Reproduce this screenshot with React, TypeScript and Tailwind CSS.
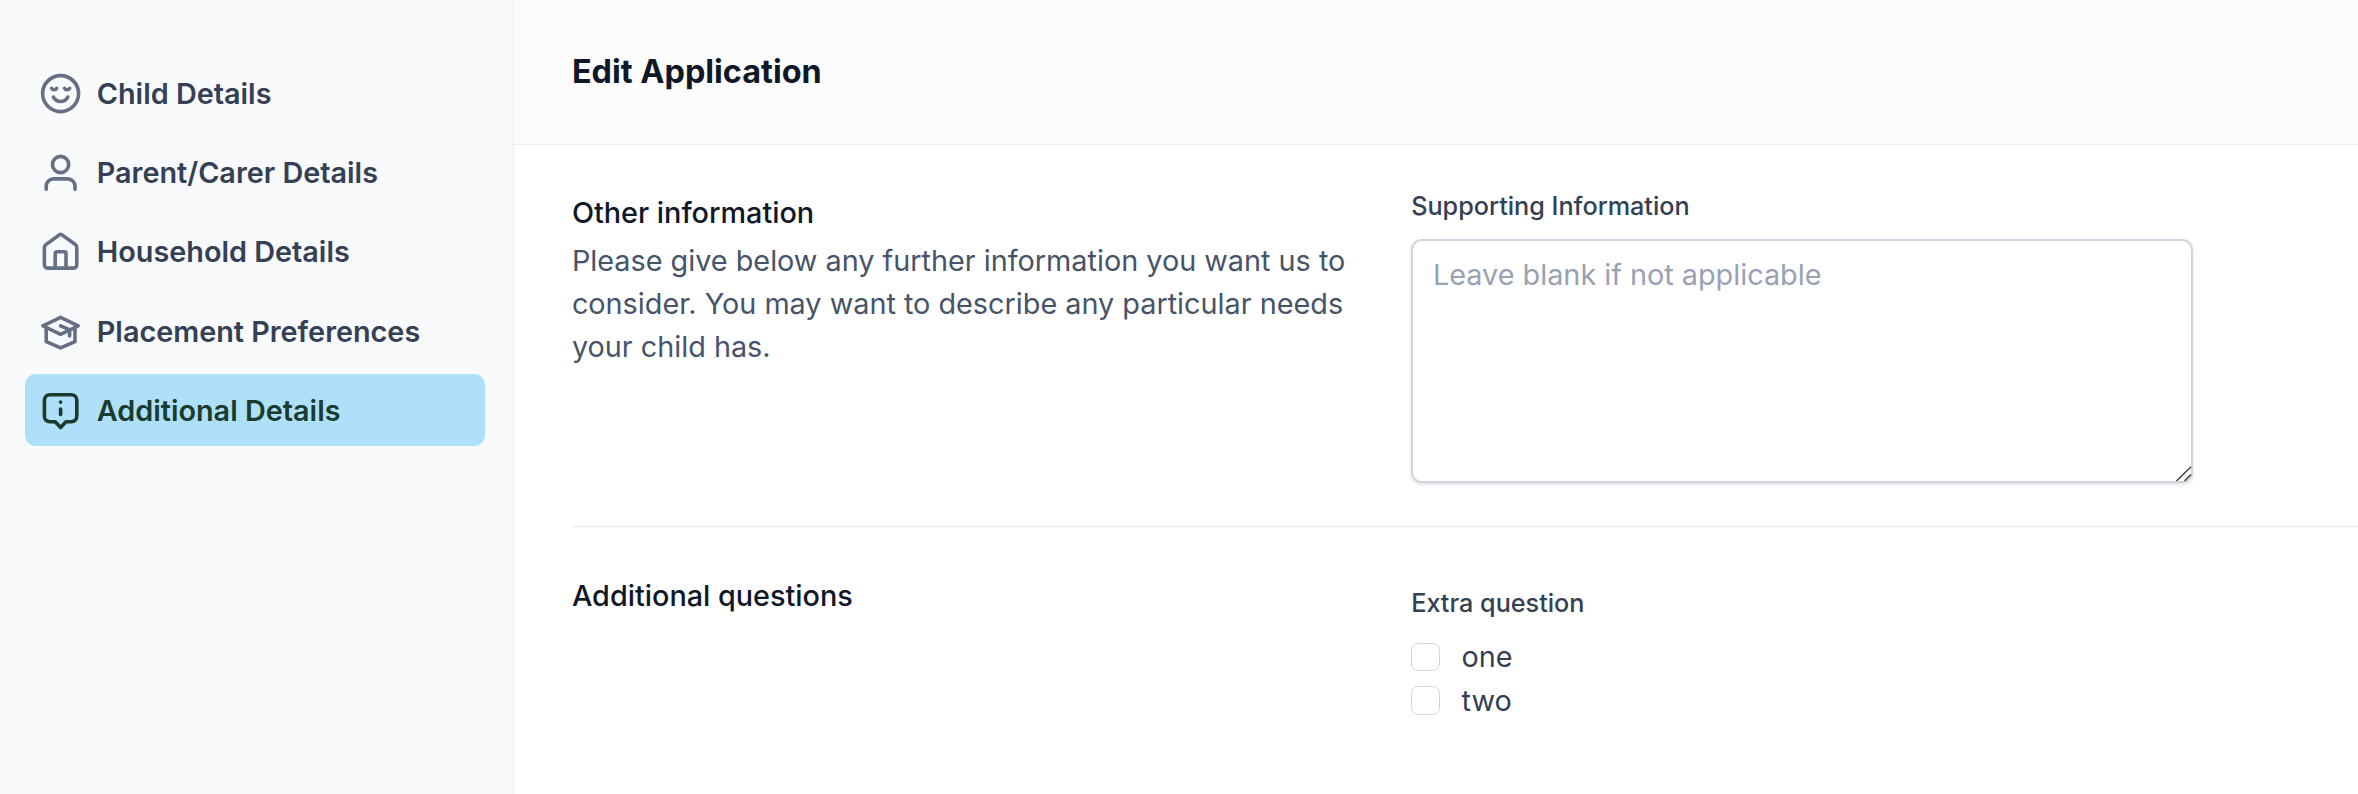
import type { ReactNode } from "react";

function Icon({ children }: { children: ReactNode }) {
  return (
    <svg
      className="size-[43.2px] shrink-0"
      viewBox="0 0 24 24"
      fill="none"
      stroke="currentColor"
      strokeWidth="2"
      strokeLinecap="round"
      strokeLinejoin="round"
      aria-hidden="true"
    >
      {children}
    </svg>
  );
}

const items: { label: string; icon: ReactNode; active?: boolean }[] = [
  {
    label: "Child Details",
    icon: (
      <>
        <circle cx="12" cy="12" r="10" />
        <path d="M7 9.1c.3.5.8.8 1.4.8s1.1-.3 1.4-.8" />
        <path d="M14.2 9.1c.3.5.8.8 1.4.8s1.1-.3 1.4-.8" />
        <path d="M8 14c.8 1.5 2.2 2.4 4 2.4s3.2-.9 4-2.4" />
      </>
    ),
  },
  {
    label: "Parent/Carer Details",
    icon: (
      <>
        <circle cx="12" cy="7.5" r="4.5" />
        <path d="M4 21.3v-1.8a4 4 0 0 1 4-4h8a4 4 0 0 1 4 4v1.8" />
      </>
    ),
  },
  {
    label: "Household Details",
    icon: (
      <>
        <path d="M3 9.7a2 2 0 0 1 .8-1.6l7.6-5.5a1 1 0 0 1 1.2 0l7.6 5.5a2 2 0 0 1 .8 1.6V19.500a1.700 1.700 0 0 1-1.700 1.700H4.700A1.700 1.700 0 0 1 3 19.500z" />
        <path d="M9 21v-8a.9.9 0 0 1 .9-.9h4.2a.9.9 0 0 1 .9.9v8" />
      </>
    ),
  },
  {
    label: "Placement Preferences",
    icon: (
      <>
        <path d="M2.200 8.800 12 4.100l9.800 4.700L12 13.500z" />
        <path d="M4 10v7.600l8 3.500 8-3.500V10" />
        <path d="M12 8.800l5 2.100v3.500" />
      </>
    ),
  },
  {
    label: "Additional Details",
    active: true,
    icon: (
      <>
        <path d="M6 3.200h12a3 3 0 0 1 3 3V15.200a3 3 0 0 1-3 3h-3l-3 3.200-3-3.200H6a3 3 0 0 1-3-3V6.200a3 3 0 0 1 3-3z" />
        <path d="M12 7.300v.01M12 11.100v3.100" />
      </>
    ),
  },
];

function Sidebar() {
  return (
    <aside className="w-[514px] shrink-0 border-r border-[#eaecf0] bg-[#f9fafc] pt-[57.6px] pr-[28px] pl-[25px]">
      <nav className="flex flex-col gap-[7.2px]">
        {items.map((item) => (
          <a
            key={item.label}
            href="#"
            className={
              item.active
                ? "flex h-[72px] items-center gap-[14.7px] rounded-[10.8px] bg-[#aee0fa] pl-[13.9px] font-semibold text-[#1a3b2d]"
                : "flex h-[72px] items-center gap-[14.7px] rounded-[10.8px] pl-[13.9px] font-semibold text-[#667085]"
            }
          >
            <Icon>{item.icon}</Icon>
            <span className={item.active ? "text-[#1a3b2d]" : "text-[#344054]"}>{item.label}</span>
          </a>
        ))}
      </nav>
    </aside>
  );
}

function Option({ label }: { label: string }) {
  return (
    <label className="flex h-[43.2px] items-center gap-[21.6px]">
      <input
        type="checkbox"
        className="size-[28.8px] appearance-none rounded-[7.2px] border border-[#d0d5dd] bg-white"
      />
      <span>{label}</span>
    </label>
  );
}

export default function App() {
  return (
    <div className="flex h-[794px] w-full overflow-hidden bg-white font-['Inter',sans-serif] text-[28.8px] leading-[43.2px] text-[#344054]">
      <Sidebar />
      <main className="min-w-0 flex-1">
        <header className="flex h-[145px] items-center border-b border-[#eaecf0] bg-[#fcfcfd] pl-[57.9px]">
          <h1 className="text-[32.4px] font-bold text-[#101828]">Edit Application</h1>
        </header>
        <div className="pl-[57.9px]">
          <section className="flex h-[382px] border-b border-[#e4e7ec] pt-[46px]">
            <div className="w-[839.3px] shrink-0">
              <h2 className="font-medium text-[#101828]">Other information</h2>
              <p className="mt-[4.8px] w-[782px] leading-[43px] text-[#475467]">
                Please give below any further information you want us to consider. You may want to
                describe any particular needs your child has.
              </p>
            </div>
            <div className="w-[782px] -mt-[3px]">
              <label htmlFor="supporting" className="block text-[25.2px] leading-[36px] font-medium">
                Supporting Information
              </label>
              <div className="relative mt-[15px] h-[244px]">
                <textarea
                  id="supporting"
                  placeholder="Leave blank if not applicable"
                  className="block h-full w-full resize-none rounded-[10.8px] border-2 border-[#d0d5dd] bg-white px-[19.8px] py-[12px] shadow-[0_1.8px_3.6px_rgba(16,24,40,0.12)] outline-none placeholder:text-[#98a2b3]"
                />
                <svg
                  className="absolute right-[1px] bottom-[1px] size-[16px]"
                  viewBox="0 0 16 16"
                  stroke="#444"
                  strokeWidth="1.5"
                  aria-hidden="true"
                >
                  <path d="M.5 15 15 .8M8.5 15 15 8.5" />
                </svg>
              </div>
            </div>
          </section>
          <section className="flex pt-[47px]">
            <div className="w-[839.3px] shrink-0">
              <h2 className="font-medium text-[#101828]">Additional questions</h2>
            </div>
            <div role="group" aria-labelledby="extra" className="pt-[11px]">
              <div id="extra" className="text-[25.2px] leading-[36px] font-medium">
                Extra question
              </div>
              <div className="mt-[14.4px] flex flex-col gap-[0.6px]">
                <Option label="one" />
                <Option label="two" />
              </div>
            </div>
          </section>
        </div>
      </main>
    </div>
  );
}
